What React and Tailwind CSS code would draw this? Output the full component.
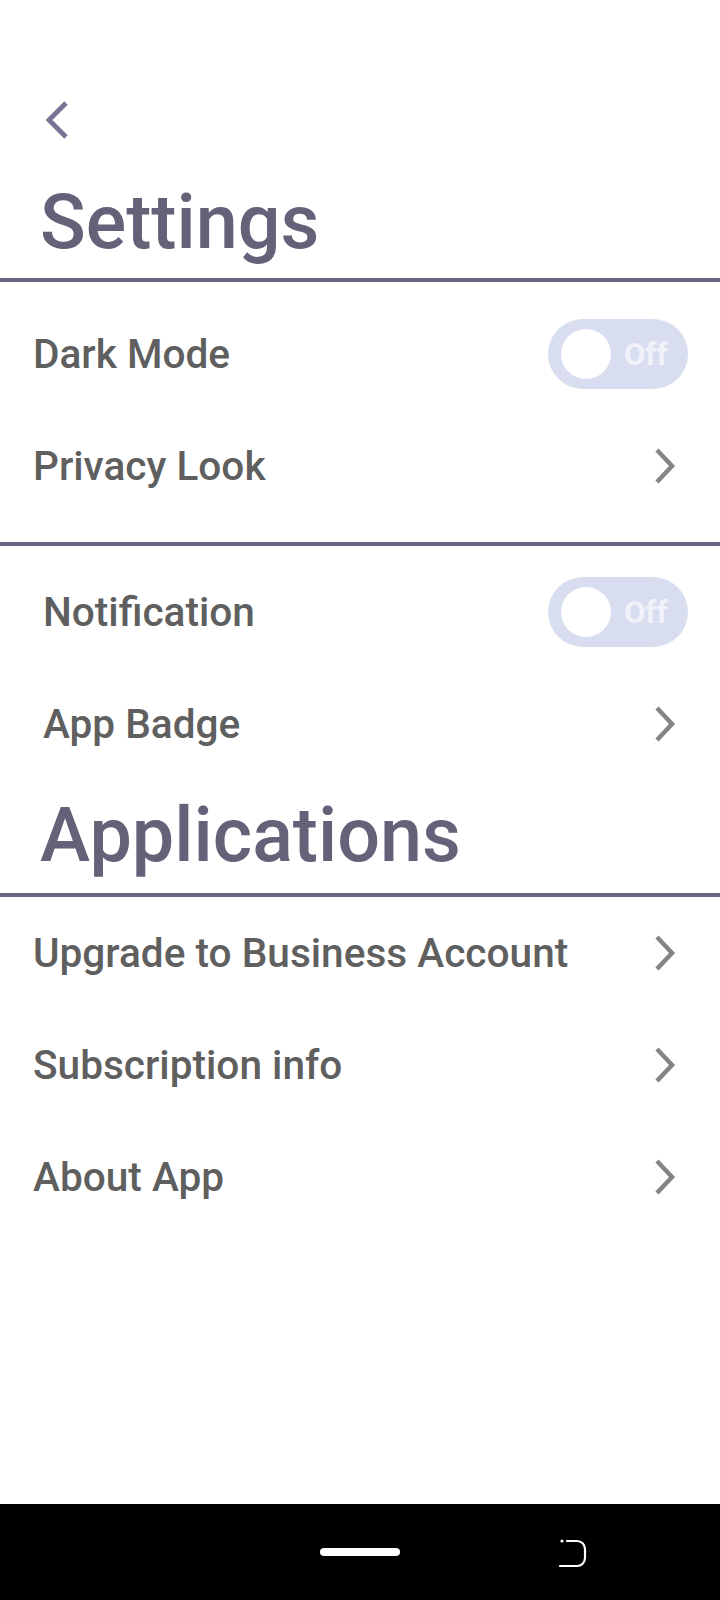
import React from "react";

const font = { fontFamily: "Roboto, 'Noto Sans', sans-serif" };

function Chevron() {
  return (
    <svg width="24" height="38" viewBox="0 0 24 38" className="shrink-0">
      <polyline
        points="4,3 19,19 4,35"
        fill="none"
        stroke="#858585"
        strokeWidth="4.5"
      />
    </svg>
  );
}

function Toggle() {
  return (
    <div className="w-[140px] h-[70px] rounded-full bg-[#d8def0] flex items-center pl-[13px] gap-[13px]">
      <div className="w-[50px] h-[50px] rounded-full bg-white" />
      <span className="text-[31px] font-bold text-[#f1f2f9] leading-none">Off</span>
    </div>
  );
}

function Row({ label, indent, toggle }) {
  return (
    <div
      className={`h-[112px] flex items-center justify-between pr-[43px] ${
        indent ? "pl-[43px]" : "pl-[33px]"
      }`}
    >
      <span className="text-[40.6px] font-medium text-[#5f5f5f]">{label}</span>
      {toggle ? (
        <div className="-mr-[11px]">
          <Toggle />
        </div>
      ) : (
        <Chevron />
      )}
    </div>
  );
}

function Divider() {
  return <div className="h-[4px] bg-[#6b6480]" />;
}

export default function App() {
  return (
    <div className="w-[720px] h-[1600px] bg-white flex flex-col" style={font}>
      <div className="h-[101px]" />
      <div className="pl-[44px] h-[38px]">
        <svg width="26" height="38" viewBox="0 0 26 38">
          <polyline
            points="22,2 5,19 22,36"
            fill="none"
            stroke="#7a7296"
            strokeWidth="4.8"
          />
        </svg>
      </div>
      <div className="h-[139px] pt-[33px]">
        <h1 className="pl-[40px] text-[75.5px] font-medium leading-[100px] text-[#676079]">
          Settings
        </h1>
      </div>
      <Divider />
      <div className="h-[16px]" />
      <Row label="Dark Mode" toggle />
      <Row label="Privacy Look" />
      <div className="h-[20px]" />
      <Divider />
      <div className="h-[10px]" />
      <Row label="Notification" indent toggle />
      <Row label="App Badge" indent />
      <div className="h-[113px] pt-[5px]">
        <h1 className="pl-[40px] text-[75.5px] font-medium leading-[100px] text-[#676079]">
          Applications
        </h1>
      </div>
      <Divider />
      <Row label="Upgrade to Business Account" />
      <Row label="Subscription info" />
      <Row label="About App" />
      <div className="flex-1" />
      <div className="h-[96px] bg-black flex items-center relative">
        <div className="flex-1 flex justify-center">
          <div className="w-[80px] h-[8px] rounded-full bg-white" />
        </div>
        <svg
          width="30"
          height="32"
          viewBox="0 0 30 32"
          className="absolute left-[558px] top-[33px]"
        >
          <circle cx="4" cy="4" r="1.6" fill="white" />
          <path
            d="M9 4 H19 A8 8 0 0 1 27 12 V21 A8 8 0 0 1 19 29 H2"
            fill="none"
            stroke="white"
            strokeWidth="2.2"
            strokeLinecap="round"
          />
        </svg>
      </div>
    </div>
  );
}
